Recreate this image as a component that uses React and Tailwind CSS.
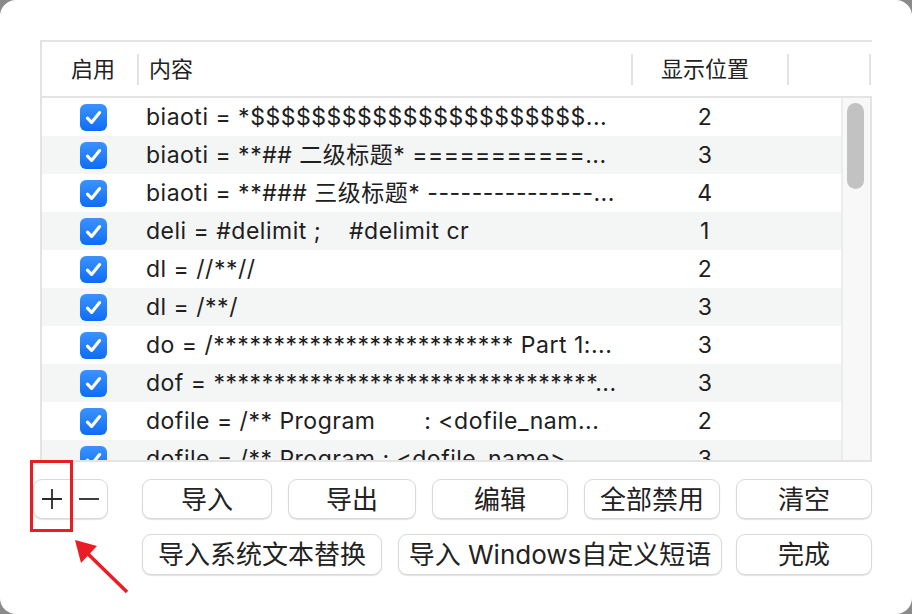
import React from 'react';

const rows = [
  { text: 'biaoti = *$$$$$$$$$$$$$$$$$$$$$$...', pos: 2 },
  { text: 'biaoti = **## 二级标题* ===========...', pos: 3 },
  { text: 'biaoti = **### 三级标题* ---------------...', pos: 4 },
  { text: 'deli = #delimit ;    #delimit cr', pos: 1 },
  { text: 'dl = //**//', pos: 2 },
  { text: 'dl = /**/', pos: 3 },
  { text: 'do = /************************* Part 1:...', pos: 3 },
  { text: 'dof = ********************************...', pos: 3 },
  { text: 'dofile = /** Program       : <dofile_nam...', pos: 2 },
  { text: 'dofile = /** Program : <dofile_name>', pos: 3 },
];

function Checkbox() {
  return (
    <div className="flex h-[27px] w-[27px] items-center justify-center rounded-[6px] bg-gradient-to-b from-[#3a93ff] to-[#0b6cf4]">
      <svg width="27" height="27" viewBox="0 0 27 27" fill="none">
        <path
          d="M7.5 14.2 L11.6 18.4 L19.6 8.6"
          stroke="white"
          strokeWidth="3.2"
          strokeLinecap="round"
          strokeLinejoin="round"
        />
      </svg>
    </div>
  );
}

function Btn({ className = '', children }) {
  return (
    <button
      type="button"
      className={`flex items-center justify-center rounded-[9px] border border-[#d9d9d9] bg-white text-[26px] text-[#222] shadow-[0_1px_1px_rgba(0,0,0,0.12)] ${className}`}
    >
      {children}
    </button>
  );
}

export default function App() {
  return (
    <div className="h-[614px] w-[912px] bg-[#8a8a8a] font-['Inter','Noto_Sans_CJK_SC',sans-serif]">
      <div className="relative flex h-full w-full flex-col rounded-[16px] bg-white pt-[40px]">
        <div className="ml-[40px] flex w-[832px] flex-col border-l-2 border-[#e3e3e3]">
          {/* header */}
          <div className="flex h-[58px] items-center border-y-2 border-[#e4e4e4] text-[22px] text-[#222]">
            <div className="w-[95px] pl-[29px]">启用</div>
            <div className="h-[31px] w-[2px] bg-[#e3e3e3]" />
            <div className="w-[492px] pl-[10px]">内容</div>
            <div className="h-[31px] w-[2px] bg-[#e3e3e3]" />
            <div className="w-[154px] pr-[10px] text-center">显示位置</div>
            <div className="h-[31px] w-[2px] bg-[#e3e3e3]" />
            <div className="w-[80px]" />
            <div className="h-[31px] w-[2px] bg-[#e3e3e3]" />
          </div>
          {/* body */}
          <div className="flex h-[364px] border-b-2 border-[#e4e4e4]">
            <div className="flex-1 overflow-hidden">
              {rows.map((r, i) => (
                <div
                  key={i}
                  className={`flex h-[38px] shrink-0 items-center text-[23px] tracking-[0.5px] text-[#202020] ${i % 2 ? 'bg-[#f4f5f5]' : 'bg-white'}`}
                >
                  <div className="w-[104px] pl-[38px]">
                    <Checkbox />
                  </div>
                  <div className="w-[486px] overflow-hidden whitespace-pre">{r.text}</div>
                  <div className="w-[146px] text-center">{r.pos}</div>
                </div>
              ))}
            </div>
            <div className="w-[31px] border-x-2 border-l-[#ececec] border-r-[#e4e4e4] bg-[#f8f8f8] pl-[4px] pt-[5px]">
              <div className="h-[86px] w-[17px] rounded-full bg-[#c2c2c2]" />
            </div>
          </div>
        </div>

        {/* buttons */}
        <div className="ml-[33px] mt-[17px] flex h-[40px] gap-[16px]">
          <div className="flex h-[40px] w-[75px] items-center rounded-[9px] border border-[#d9d9d9] bg-white shadow-[0_1px_1px_rgba(0,0,0,0.12)]">
            <div className="flex w-[37px] justify-center">
              <svg width="22" height="22" viewBox="0 0 22 22">
                <path d="M11 1 V21 M1 11 H21" stroke="#2a2a2a" strokeWidth="1.8" />
              </svg>
            </div>
            <div className="flex w-[37px] justify-center">
              <svg width="22" height="22" viewBox="0 0 22 22">
                <path d="M1 11 H21" stroke="#2a2a2a" strokeWidth="1.8" />
              </svg>
            </div>
          </div>
          <Btn className="ml-[18px] w-[130px]">导入</Btn>
          <Btn className="w-[128px]">导出</Btn>
          <Btn className="w-[136px]">编辑</Btn>
          <Btn className="w-[136px]">全部禁用</Btn>
          <Btn className="w-[136px]">清空</Btn>
        </div>
        <div className="ml-[142px] mt-[15px] flex h-[41px] gap-[16px]">
          <Btn className="w-[240px]">导入系统文本替换</Btn>
          <Btn className="w-[324px]">导入 Windows自定义短语</Btn>
          <Btn className="-ml-[2px] w-[136px]">完成</Btn>
        </div>

        {/* annotation */}
        <div className="absolute left-[30px] top-[460px] h-[72px] w-[43px] border-[3px] border-[#ea1c24]" />
        <svg className="absolute left-0 top-0" width="912" height="614" viewBox="0 0 912 614">
          <line x1="127" y1="592" x2="86" y2="552" stroke="#ea1c24" strokeWidth="3.5" />
          <polygon points="75,540 97,546 81,563" fill="#ea1c24" />
        </svg>
      </div>
    </div>
  );
}
